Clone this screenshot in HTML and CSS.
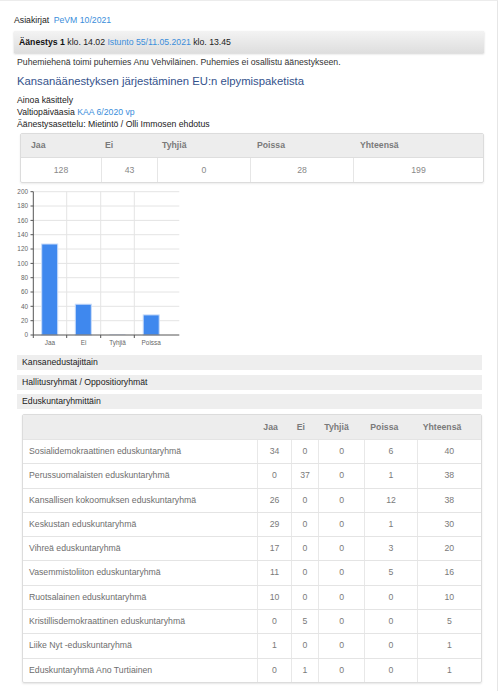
FILE: index.html
```html
<!DOCTYPE html>
<html lang="fi">
<head>
<meta charset="utf-8">
<title>Äänestys 1</title>
<link rel="stylesheet" href="styles.css">
</head>
<body>
<div class="page">
  <div class="doclinks">Asiakirjat <a class="link" href="#">PeVM 10/2021</a></div>
  <div class="vote-bar"><b>Äänestys 1</b> klo. 14.02 <a class="link" href="#">Istunto 55/11.05.2021</a> klo. 13.45</div>
  <p class="note">Puhemiehenä toimi puhemies Anu Vehviläinen. Puhemies ei osallistu äänestykseen.</p>
  <h1 class="title">Kansanäänestyksen järjestäminen EU:n elpymispaketista</h1>
  <div class="meta">
    <div>Ainoa käsittely</div>
    <div>Valtiopäiväasia <a class="link" href="#">KAA 6/2020 vp</a></div>
    <div>Äänestysasettelu: Mietintö / Olli Immosen ehdotus</div>
  </div>

  <div class="summary">
    <div class="summary-head">
      <div>Jaa</div><div>Ei</div><div>Tyhjiä</div><div>Poissa</div><div>Yhteensä</div>
    </div>
    <div class="summary-row">
      <div>128</div><div>43</div><div>0</div><div>28</div><div>199</div>
    </div>
  </div>

  <svg class="chart" width="200" height="165" viewBox="0 0 200 165" xmlns="http://www.w3.org/2000/svg">
    <g class="grid" stroke="#e4e4e4" stroke-width="1">
      <line x1="19.3" y1="5.7" x2="165.3" y2="5.7"/>
      <line x1="19.3" y1="20.0" x2="165.3" y2="20.0"/>
      <line x1="19.3" y1="34.4" x2="165.3" y2="34.4"/>
      <line x1="19.3" y1="48.7" x2="165.3" y2="48.7"/>
      <line x1="19.3" y1="63.0" x2="165.3" y2="63.0"/>
      <line x1="19.3" y1="77.4" x2="165.3" y2="77.4"/>
      <line x1="19.3" y1="91.7" x2="165.3" y2="91.7"/>
      <line x1="19.3" y1="106.0" x2="165.3" y2="106.0"/>
      <line x1="19.3" y1="120.3" x2="165.3" y2="120.3"/>
      <line x1="19.3" y1="134.7" x2="165.3" y2="134.7"/>
      <line x1="52.7" y1="5.7" x2="52.7" y2="149"/>
      <line x1="86.7" y1="5.7" x2="86.7" y2="149"/>
      <line x1="120.3" y1="5.7" x2="120.3" y2="149"/>
    </g>
    <g fill="#3f88ee" stroke="#c9dcf9" stroke-width="1">
      <rect x="27.7" y="58" width="16" height="91"/>
      <rect x="61.3" y="118.2" width="16" height="30.8"/>
      <rect x="129.2" y="128.9" width="16" height="20.1"/>
    </g>
    <line x1="95.5" y1="148.5" x2="111.5" y2="148.5" stroke="#e3ecfb" stroke-width="1"/>
    <g stroke="#555" stroke-width="1">
      <line x1="19.3" y1="5.7" x2="19.3" y2="152"/>
      <line x1="19.3" y1="149" x2="165.3" y2="149"/>
      <line x1="16.5" y1="5.7" x2="19.3" y2="5.7"/>
      <line x1="16.5" y1="20.0" x2="19.3" y2="20.0"/>
      <line x1="16.5" y1="34.4" x2="19.3" y2="34.4"/>
      <line x1="16.5" y1="48.7" x2="19.3" y2="48.7"/>
      <line x1="16.5" y1="63.0" x2="19.3" y2="63.0"/>
      <line x1="16.5" y1="77.4" x2="19.3" y2="77.4"/>
      <line x1="16.5" y1="91.7" x2="19.3" y2="91.7"/>
      <line x1="16.5" y1="106.0" x2="19.3" y2="106.0"/>
      <line x1="16.5" y1="120.3" x2="19.3" y2="120.3"/>
      <line x1="16.5" y1="134.7" x2="19.3" y2="134.7"/>
      <line x1="16.5" y1="149" x2="19.3" y2="149"/>
      <line x1="52.7" y1="149" x2="52.7" y2="152"/>
      <line x1="86.7" y1="149" x2="86.7" y2="152"/>
      <line x1="120.3" y1="149" x2="120.3" y2="152"/>
    </g>
    <g class="ylabels" text-anchor="end">
      <text x="14" y="8">200</text>
      <text x="14" y="22.3">180</text>
      <text x="14" y="36.7">160</text>
      <text x="14" y="51">140</text>
      <text x="14" y="65.3">120</text>
      <text x="14" y="79.7">100</text>
      <text x="14" y="94">80</text>
      <text x="14" y="108.3">60</text>
      <text x="14" y="122.6">40</text>
      <text x="14" y="137">20</text>
      <text x="14" y="151.3">0</text>
    </g>
    <g class="xlabels" text-anchor="middle">
      <text x="36" y="158.5">Jaa</text>
      <text x="69.7" y="158.5">Ei</text>
      <text x="103.5" y="158.5">Tyhjiä</text>
      <text x="137.2" y="158.5">Poissa</text>
    </g>
  </svg>

  <div class="accordions">
    <div class="acc">Kansanedustajittain</div>
    <div class="acc">Hallitusryhmät / Oppositioryhmät</div>
    <div class="acc">Eduskuntaryhmittäin</div>
  </div>

  <div class="groups">
    <div class="g-head">
      <div></div><div>Jaa</div><div>Ei</div><div>Tyhjiä</div><div>Poissa</div><div>Yhteensä</div>
    </div>
    <div class="g-row"><div>Sosialidemokraattinen eduskuntaryhmä</div><div>34</div><div>0</div><div>0</div><div>6</div><div>40</div></div>
    <div class="g-row"><div>Perussuomalaisten eduskuntaryhmä</div><div>0</div><div>37</div><div>0</div><div>1</div><div>38</div></div>
    <div class="g-row"><div>Kansallisen kokoomuksen eduskuntaryhmä</div><div>26</div><div>0</div><div>0</div><div>12</div><div>38</div></div>
    <div class="g-row"><div>Keskustan eduskuntaryhmä</div><div>29</div><div>0</div><div>0</div><div>1</div><div>30</div></div>
    <div class="g-row"><div>Vihreä eduskuntaryhmä</div><div>17</div><div>0</div><div>0</div><div>3</div><div>20</div></div>
    <div class="g-row"><div>Vasemmistoliiton eduskuntaryhmä</div><div>11</div><div>0</div><div>0</div><div>5</div><div>16</div></div>
    <div class="g-row"><div>Ruotsalainen eduskuntaryhmä</div><div>10</div><div>0</div><div>0</div><div>0</div><div>10</div></div>
    <div class="g-row"><div>Kristillisdemokraattinen eduskuntaryhmä</div><div>0</div><div>5</div><div>0</div><div>0</div><div>5</div></div>
    <div class="g-row"><div>Liike Nyt -eduskuntaryhmä</div><div>1</div><div>0</div><div>0</div><div>0</div><div>1</div></div>
    <div class="g-row"><div>Eduskuntaryhmä Ano Turtiainen</div><div>0</div><div>1</div><div>0</div><div>0</div><div>1</div></div>
  </div>
</div>
</body>
</html>
```
FILE: styles.css
```css
html, body {
  margin: 0;
  padding: 0;
  background: #fff;
}
body {
  font-family: "Liberation Sans", Arial, sans-serif;
  font-size: 8.7px;
  color: #222;
}
.page {
  box-sizing: border-box;
  width: 498px;
  height: 691px;
  overflow: hidden;
  border-top: 1px solid #ececec;
  border-right: 1px solid #e6e6e6;
  padding: 13px 13px 0 14px;
}
.link {
  color: #3a8edb;
  text-decoration: none;
}
.doclinks {
  line-height: 12px;
  height: 12px;
}
.doclinks .link {
  margin-left: 2px;
}
.vote-bar {
  margin-top: 5px;
  height: 22px;
  line-height: 22px;
  padding-left: 5px;
  background: linear-gradient(#f3f3f3, #dedede);
  box-shadow: 0 1px 2px rgba(0, 0, 0, 0.18);
  color: #222;
}
.vote-bar b {
  font-weight: bold;
  color: #111;
}
.note {
  margin: 3px 0 0 3px;
  line-height: 12px;
  color: #333;
}
.title {
  margin: 6px 0 0 3px;
  font-size: 11.3px;
  font-weight: normal;
  line-height: 14px;
  color: #34528c;
}
.meta {
  margin: 6px 0 0 3px;
  line-height: 12px;
  color: #222;
}
.summary {
  margin: 3px 0 0 6px;
  width: 464px;
  box-sizing: border-box;
  border: 1px solid #dcdcdc;
  border-radius: 2px;
  box-shadow: 0 1px 2px rgba(0, 0, 0, 0.08);
  overflow: hidden;
}
.summary-head {
  display: grid;
  grid-template-columns: 74px 57px 95px 103px 1fr;
  height: 23px;
  line-height: 23px;
  background: #ededed;
  border-bottom: 1px solid #dedede;
  font-weight: bold;
  color: #7a7a7a;
}
.summary-head > div {
  padding-left: 10px;
}
.summary-row {
  display: grid;
  grid-template-columns: 80px 56px 93px 103px 1fr;
  height: 24px;
  line-height: 24px;
  color: #888;
  text-align: center;
}
.summary-row > div + div {
  border-left: 1px solid #e6e6e6;
}
.chart {
  display: block;
  margin-top: 3px;
}
.chart text {
  font-family: "Liberation Sans", Arial, sans-serif;
  font-size: 6.4px;
  fill: #666;
}
.accordions {
  margin: 4px 0 0 3px;
  width: 465px;
  display: flex;
  flex-direction: column;
  gap: 4.5px;
}
.acc {
  height: 15px;
  line-height: 15px;
  padding-left: 5px;
  background: #eeeeee;
  color: #222;
}
.groups {
  margin: 5px 0 0 8px;
  width: 460px;
  box-sizing: border-box;
  border: 1px solid #dcdcdc;
  border-radius: 2px;
  box-shadow: 0 1px 2px rgba(0, 0, 0, 0.1);
  overflow: hidden;
}
.g-head,
.g-row {
  display: grid;
  grid-template-columns: 234.3px 33.4px 27.6px 46px 52.4px 1fr;
}
.g-head {
  height: 24px;
  line-height: 24px;
  background: #ededed;
  font-weight: bold;
  color: #7a7a7a;
}
.g-head > div {
  padding-left: 6px;
}
.g-row {
  box-sizing: border-box;
  height: 24.3px;
  line-height: 23.3px;
  border-top: 1px solid #e4e4e4;
  color: #7a7a7a;
}
.g-row > div {
  text-align: center;
}
.g-row > div:first-child {
  text-align: left;
  padding-left: 6px;
  color: #6e6e6e;
}
.g-row > div + div {
  border-left: 1px solid #e8e8e8;
}
```
